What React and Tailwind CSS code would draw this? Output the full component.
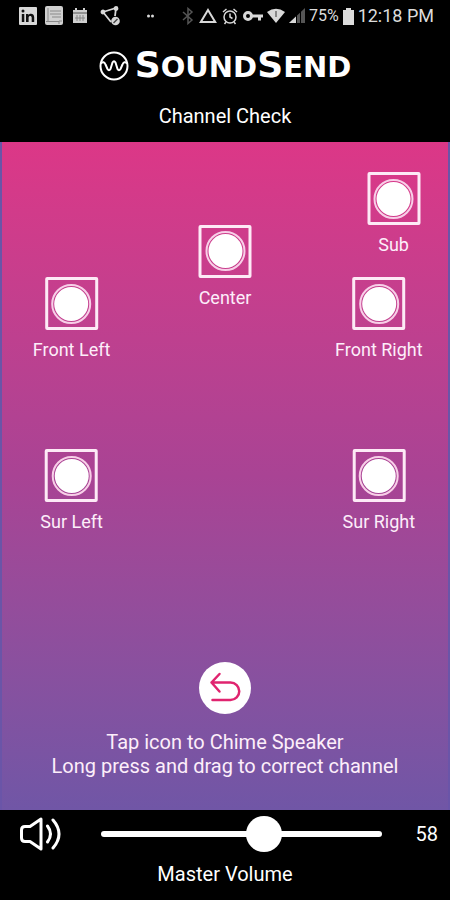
import React, { useState } from 'react';

// Positions are percentages of the room area, x is the middle of the speaker
const speakers = [
    { id: 'sub', name: 'Sub', x: 87.8, y: 5.8 },
    { id: 'center', name: 'Center', x: 50, y: 15.9 },
    { id: 'front-left', name: 'Front Left', x: 15.6, y: 26 },
    { id: 'front-right', name: 'Front Right', x: 84.5, y: 26 },
    { id: 'sur-left', name: 'Sur Left', x: 15.6, y: 59.1 },
    { id: 'sur-right', name: 'Sur Right', x: 84.5, y: 59.1 },
];

function StatusBar() {
    return (
        <div className="flex h-8 items-center justify-between pl-4 pr-4 text-[#dcdcdc]">
            <div className="flex items-center gap-2">
                <svg width="24" height="20" viewBox="0 0 24 20">
                    <rect x="3" y="1" width="18" height="18" rx="1" fill="#d8d8d8" />
                    <g fill="#111">
                        <circle cx="7" cy="5" r="1.5" />
                        <rect x="5.8" y="8" width="2.5" height="8" />
                        <path d="M10 8h2.4v1.1c1.6-2.2 5.8-1.6 5.8 2.1V16h-2.5v-4.3c0-2.3-3.1-2.2-3.1 0V16H10z" />
                    </g>
                </svg>
                <svg width="20" height="20" viewBox="0 0 20 20" className="-ml-1">
                    <path d="M3 0h14q2 0 2 2v15q0 2-2 2H3q-2 0-2-2V2q0-2 2-2z" fill="#d0d0d0" />
                    <path d="M4 2v13M6 5h11M6 8h11M8 11h9M2 15.500h13M15 18v-3h3" stroke="#8a8a8a" fill="none" />
                </svg>
                <svg width="16" height="18" viewBox="0 0 16 18">
                    <path d="M1 3h2V1h2v2h6V1h2v2h2v13H1z" fill="#cfcfcf" />
                    <path d="M1 6h14" stroke="#555" />
                    <path d="M5 8v6M8 8v6M11 8v6M3 11h10" stroke="#888" />
                </svg>
                <svg width="22" height="20" viewBox="0 0 22 20" fill="none" stroke="#d8d8d8" strokeWidth="1.800" className="ml-1">
                    <path d="M3 6l13-4-1 8M3 6l8 10" />
                    <circle cx="3" cy="6" r="1.500" fill="#d8d8d8" />
                    <circle cx="16" cy="2.500" r="1.500" fill="#d8d8d8" />
                    <circle cx="15.500" cy="15" r="4.300" fill="#d8d8d8" stroke="none" />
                    <path d="M13.500 17l4-4" stroke="#444" strokeWidth="1.500" />
                </svg>
                <svg width="10" height="6" viewBox="0 0 10 6" fill="#d8d8d8" className="ml-4">
                    <circle cx="2.500" cy="3" r="1.500" />
                    <circle cx="6.500" cy="3" r="1.500" />
                </svg>
            </div>
            <div className="flex items-center gap-1 font-['Roboto',sans-serif] text-base">
                <svg width="14" height="18" viewBox="0 0 14 18" fill="none" stroke="#555" strokeWidth="1.500">
                    <path d="M2 5l9 8-4 3.500v-15L11 5l-9 8" />
                </svg>
                <svg width="18" height="18" viewBox="0 0 18 18" fill="none" stroke="#d8d8d8" strokeWidth="2">
                    <path d="M9 3l7.200 12H1.800z" />
                </svg>
                <svg width="18" height="18" viewBox="0 0 18 18" fill="none" stroke="#d8d8d8" strokeWidth="1.500">
                    <circle cx="9" cy="10" r="6" />
                    <path d="M9 6.500V10l2.500 1.500M2 5l3.500-3M16 5l-3.500-3M5 15l-1.500 2M13 15l1.500 2" />
                </svg>
                <svg width="20" height="18" viewBox="0 0 20 18" fill="none" stroke="#d8d8d8" strokeWidth="3">
                    <circle cx="5" cy="9" r="3.500" />
                    <path d="M9 9h11M16.500 9v4.500" />
                </svg>
                <svg width="18" height="18" viewBox="0 0 18 18">
                    <path d="M0 5q9-6.500 18 0L9 16z" fill="#d8d8d8" />
                    <path d="M9 4v6" stroke="#888" strokeWidth="2" />
                </svg>
                <svg width="16" height="18" viewBox="0 0 16 18">
                    <path d="M16 1v15H0z" fill="#555" />
                    <path d="M7 9.500V16H0z" fill="#d8d8d8" />
                    <path d="M7.500 1v15M11.500 1v15" stroke="#000" />
                </svg>
                <span>75%</span>
                <svg width="11" height="17" viewBox="0 0 11 17" fill="#dcdcdc">
                    <path d="M3 0h5v2h3v15H0V2h3z" />
                </svg>
                <span className="text-lg">12:18 PM</span>
            </div>
        </div>
    );
}

function Logo() {
    return (
        <div className="flex h-9 items-center justify-center gap-1.5 text-white">
            <svg width="30" height="30" viewBox="0 0 30 30" fill="none" stroke="white" strokeWidth="2" strokeLinejoin="round">
                <circle cx="15" cy="15" r="13.500" />
                <path d="M1.700 12.500C4 10.500 5.500 11 6.500 13.500l2 4.500q1.500 2.500 3 0l2-6.500q1.500-2.500 3 0l2 6.500q1.500 2.500 3 0l2-4.500c1-2.500 2.500-3 4.800-1" />
            </svg>
            <h1 className="font-['DejaVu_Sans',sans-serif] text-[29px] leading-9 font-bold">
                <span className="text-4xl leading-9">S</span>OUND<span className="text-4xl leading-9">S</span>END
            </h1>
        </div>
    );
}

function Speaker({ speaker }) {
    return (
        <button
            type="button"
            style={{ left: `${speaker.x}%`, top: `${speaker.y}%` }}
            className="absolute flex -translate-x-1/2 flex-col items-center gap-2.5 whitespace-nowrap"
        >
            <span className="flex size-[53px] items-center justify-center rounded-xs border-3 border-[#fdeaf6]">
                <span className="flex size-10 items-center justify-center rounded-full border-2 border-[#f8cfe8]">
                    <span className="size-[34px] rounded-full bg-white" />
                </span>
            </span>
            <span className="text-lg leading-5">{speaker.name}</span>
        </button>
    );
}

export default function App() {
    const [volume, setVolume] = useState(58);

    return (
        <div className="flex min-h-screen flex-col bg-black font-['Roboto',sans-serif] text-white">
            <header className="flex flex-col pb-3.5">
                <StatusBar />
                <div className="pt-4">
                    <Logo />
                </div>
                <h2 className="pt-5 text-center text-xl leading-6">Channel Check</h2>
            </header>

            <main className="flex flex-1 flex-col border-x-2 border-[#6a55a8] bg-linear-to-b from-[#dc3787] via-[#a94394] to-[#7056a6] text-[#fdeefa]">
                <div className="relative flex-1">
                    {speakers.map(speaker => (
                        <Speaker key={speaker.id} speaker={speaker} />
                    ))}
                </div>
                <div className="flex flex-col items-center gap-4 pb-8">
                    <button
                        type="button"
                        aria-label="Reset channels"
                        className="flex size-[52px] items-center justify-center rounded-full bg-white"
                    >
                        <svg width="32" height="32" viewBox="0 0 32 32" fill="none" stroke="#e0246f" strokeWidth="2.500" strokeLinecap="round" strokeLinejoin="round">
                            <path d="M10.500 2L2.500 10.500l8 9M2.500 10.500H21.500a8.750 8.750 0 0 1 0 17.500H3.500" />
                        </svg>
                    </button>
                    <p className="text-center text-xl leading-6">
                        Tap icon to Chime Speaker
                        <br />
                        Long press and drag to correct channel
                    </p>
                </div>
            </main>

            <footer className="flex flex-col pt-1.5 pb-3.5">
                <div className="flex items-center pr-3 pl-[18px]">
                    <svg width="46" height="36" viewBox="0 0 46 36" fill="none" stroke="white" strokeWidth="3" strokeLinecap="round" strokeLinejoin="round">
                        <path d="M23 3v30L12 25.500H7Q3.500 25.500 3.500 22v-8q0-3.500 3.500-3.500h5z" />
                        <path d="M29.500 10q6 8 0 16M35 4q12 14 0 28" />
                    </svg>
                    <div className="relative mr-5 ml-[37px] flex h-9 flex-1 items-center before:absolute before:inset-x-0 before:h-1.5 before:rounded-full before:bg-white">
                        <input
                            id="volume"
                            type="range"
                            min="0"
                            max="100"
                            value={volume}
                            onChange={e => setVolume(Number(e.target.value))}
                            className="relative -mx-[18px] h-9 flex-1 cursor-pointer appearance-none bg-transparent [&::-webkit-slider-thumb]:size-9 [&::-webkit-slider-thumb]:appearance-none [&::-webkit-slider-thumb]:rounded-full [&::-webkit-slider-thumb]:bg-white"
                        />
                    </div>
                    <output htmlFor="volume" className="w-9 text-right text-xl leading-6">{volume}</output>
                </div>
                <label htmlFor="volume" className="pt-2.5 text-center text-xl leading-6">Master Volume</label>
            </footer>
        </div>
    );
}
